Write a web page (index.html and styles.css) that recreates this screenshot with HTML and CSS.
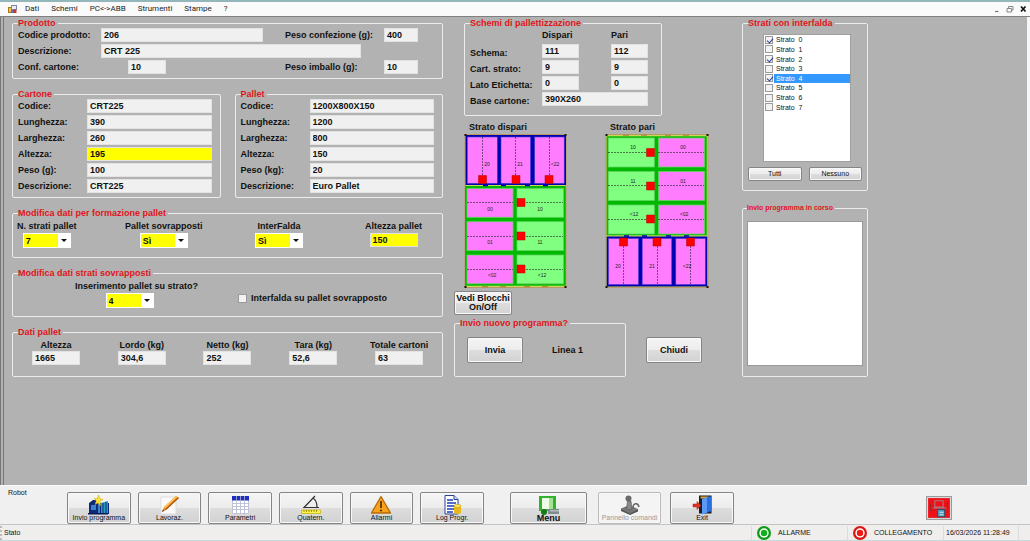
FILE: index.html
```html
<!DOCTYPE html>
<html lang="it">
<head>
<meta charset="utf-8">
<title>Pallettizzazione</title>
<link rel="stylesheet" href="styles.css">
</head>
<body>
<div class="app">
  <nav class="menubar">
    <svg class="app-icon" viewBox="0 0 9 9"><rect x="0.5" y="2.5" width="4" height="5" fill="#f5c04a" stroke="#a8771c"/><rect x="3.5" y="0.5" width="5" height="4" fill="#e9edf5" stroke="#7c88a8"/><rect x="5" y="4.5" width="3.5" height="3.5" fill="#c23a2c"/><rect x="3" y="5" width="2.5" height="3" fill="#5a6fc4"/></svg>
    <a href="#">Dati</a>
    <a href="#">Schemi</a>
    <a href="#">PC&lt;-&gt;ABB</a>
    <a href="#">Strumenti</a>
    <a href="#">Stampe</a>
    <a href="#">?</a>
    <div class="window-buttons">
      <button type="button" aria-label="Riduci"><svg viewBox="0 0 8 8"><path d="M2 6.5h3.5" stroke="#777" stroke-width="1.2"/></svg></button>
      <button type="button" aria-label="Ripristina"><svg viewBox="0 0 8 8"><path d="M2.5 3V1.5h4.500v3.500h-1.500M1 3.500h4.500v3.500h-4.500z" fill="none" stroke="#888"/></svg></button>
      <button type="button" aria-label="Chiudi finestra"><svg viewBox="0 0 8 8"><path d="M2 1.500l4.500 5M6.500 1.500l-4.500 5" stroke="#111" stroke-width="1.700"/></svg></button>
    </div>
  </nav>

  <main class="workspace">
    <div class="column">
      <fieldset class="group">
        <legend>Prodotto</legend>
        <div class="product">
          <label for="codprod">Codice prodotto:</label>
          <input id="codprod" class="span-code" value="206">
          <label for="pesoconf" class="col-weight">Peso confezione (g):</label>
          <input id="pesoconf" class="col-value" value="400">
          <label for="descr" class="col-first">Descrizione:</label>
          <input id="descr" class="span-descr" value="CRT 225">
          <label for="confcart" class="col-first">Conf. cartone:</label>
          <input id="confcart" class="col-conf" value="10">
          <label for="pesoimb" class="col-weight">Peso imballo (g):</label>
          <input id="pesoimb" class="col-value" value="10">
        </div>
      </fieldset>

      <div class="pair">
        <fieldset class="group">
          <legend>Cartone</legend>
          <div class="fields">
            <label for="c1">Codice:</label><input id="c1" value="CRT225">
            <label for="c2">Lunghezza:</label><input id="c2" value="390">
            <label for="c3">Larghezza:</label><input id="c3" value="260">
            <label for="c4">Altezza:</label><input id="c4" class="yellow" value="195">
            <label for="c5">Peso (g):</label><input id="c5" value="100">
            <label for="c6">Descrizione:</label><input id="c6" value="CRT225">
          </div>
        </fieldset>
        <fieldset class="group">
          <legend>Pallet</legend>
          <div class="fields">
            <label for="p1">Codice:</label><input id="p1" value="1200X800X150">
            <label for="p2">Lunghezza:</label><input id="p2" value="1200">
            <label for="p3">Larghezza:</label><input id="p3" value="800">
            <label for="p4">Altezza:</label><input id="p4" value="150">
            <label for="p5">Peso (kg):</label><input id="p5" value="20">
            <label for="p6">Descrizione:</label><input id="p6" value="Euro Pallet">
          </div>
        </fieldset>
      </div>

      <fieldset class="group">
        <legend>Modifica dati per formazione pallet</legend>
        <div class="formation">
          <div class="stack"><label for="nstrati">N. strati pallet</label><span class="combo"><select id="nstrati"><option>7</option></select></span></div>
          <div class="stack"><label for="sovr">Pallet sovrapposti</label><span class="combo"><select id="sovr"><option>Sì</option></select></span></div>
          <div class="stack"><label for="interf">InterFalda</label><span class="combo"><select id="interf"><option>Sì</option></select></span></div>
          <div class="stack"><label for="altp">Altezza pallet</label><input id="altp" class="short yellow" value="150"></div>
        </div>
      </fieldset>

      <fieldset class="group">
        <legend>Modifica dati strati sovrapposti</legend>
        <div class="overlap">
          <div class="stack"><label for="insp">Inserimento pallet su strato?</label><span class="combo"><select id="insp"><option>4</option></select></span></div>
          <label class="check"><input type="checkbox" class="tick">Interfalda su pallet sovrapposto</label>
        </div>
      </fieldset>

      <fieldset class="group">
        <legend>Dati pallet</legend>
        <div class="totals">
          <div class="stack"><label for="t1">Altezza</label><input id="t1" class="short" value="1665"></div>
          <div class="stack"><label for="t2">Lordo (kg)</label><input id="t2" class="short" value="304,6"></div>
          <div class="stack"><label for="t3">Netto (kg)</label><input id="t3" class="short" value="252"></div>
          <div class="stack"><label for="t4">Tara (kg)</label><input id="t4" class="short" value="52,6"></div>
          <div class="stack"><label for="t5">Totale cartoni</label><input id="t5" class="short" value="63"></div>
        </div>
      </fieldset>
    </div>

    <div class="column schemes-column">
      <fieldset class="group schemes">
        <legend>Schemi di pallettizzazione</legend>
        <div class="scheme-grid">
          <span class="head odd">Dispari</span><span class="head even">Pari</span>
          <label for="s1">Schema:</label><input id="s1" class="odd" value="111"><input class="even" aria-label="Schema pari" value="112">
          <label for="s2">Cart. strato:</label><input id="s2" class="odd" value="9"><input class="even" aria-label="Cart. strato pari" value="9">
          <label for="s3">Lato Etichetta:</label><input id="s3" class="odd" value="0"><input class="even" aria-label="Lato Etichetta pari" value="0">
          <label for="s4">Base cartone:</label><input id="s4" class="both" value="390X260">
        </div>
      </fieldset>

      <div class="layers">
        <figure>
          <figcaption>Strato dispari</figcaption>
          <svg class="layer" viewBox="0 0 104 154">
            <rect x="1" y="0.500" width="101" height="153" fill="#c9d85a" stroke="#b99a62"/>
            <rect x="1.500" y="1" width="100.500" height="50" fill="#0000b0"/>
            <rect x="1" y="52" width="100.700" height="99.700" fill="#00b800"/>
            <g fill="#ff7cff" stroke="#4a3cd8" stroke-width=".6">
              <rect x="3.300" y="3" width="30" height="46.300"/><rect x="37" y="3" width="29.500" height="46.300"/><rect x="70.700" y="3" width="29.500" height="46.300"/>
            </g>
            <g stroke="#5fd65f" stroke-width=".8">
              <g fill="#ff7cff"><rect x="3" y="54.500" width="46" height="28.800"/><rect x="3" y="87.700" width="46" height="28.800"/><rect x="3" y="121" width="46" height="28.800"/></g>
              <g fill="#80ff80"><rect x="53" y="54.500" width="46.500" height="28.800"/><rect x="53" y="87.700" width="46.500" height="28.800"/><rect x="53" y="121" width="46.500" height="28.800"/></g>
            </g>
            <g class="dash"><path d="M18.500 3v39M51.500 3v39M85.500 3v39M3 68.500h46M53 68.500h46M3 102.500h46M53 102.500h46M3 135.500h46M53 135.500h46"/></g>
            <g class="mark"><path d="M14.500 41.500h8v8h-8zM48 41.500h8v8h-8zM81 41.500h8v8h-8zM53 64.500h8v8h-8zM53 98h8v8h-8zM53 131h8v8h-8z"/></g>
            <path d="M19 51.500h5M37 51.500h5M61 51.500h5M79 51.500h5" stroke="#0000b0" stroke-width="1.500"/>
            <path d="M18 152.700h6M36 152.700h6M60 152.700h6M78 152.700h6" stroke="#b07c3c"/>
            <path d="M0.500 0h2v2h-2zM100.500 0h2v2h-2zM0.500 152h2v2h-2zM100.500 152h2v2h-2z" fill="#111"/>
            <g class="tag"><text x="23" y="32">20</text><text x="56" y="32">21</text><text x="91" y="32">&lt;22</text><text x="26" y="77">00</text><text x="76" y="77">10</text><text x="26" y="110">01</text><text x="76" y="110">11</text><text x="28" y="143">&lt;02</text><text x="78" y="143">&lt;12</text></g>
          </svg>
        </figure>
        <figure>
          <figcaption>Strato pari</figcaption>
          <svg class="layer" viewBox="0 0 104 154">
            <rect x="1" y="0.500" width="102" height="153" fill="#c9d85a" stroke="#b99a62"/>
            <rect x="1.700" y="2.300" width="100" height="99" fill="#00b800"/>
            <rect x="1.700" y="102.500" width="100.500" height="50" fill="#0000b0"/>
            <g stroke="#5fd65f" stroke-width=".8">
              <g fill="#80ff80"><rect x="3.300" y="4" width="46" height="29"/><rect x="3.300" y="37.500" width="46" height="29"/><rect x="3.300" y="71" width="46" height="29"/></g>
              <g fill="#ff7cff"><rect x="53.500" y="4" width="46" height="29"/><rect x="53.500" y="37.500" width="46" height="29"/><rect x="53.500" y="71" width="46" height="29"/></g>
            </g>
            <g fill="#ff7cff" stroke="#4a3cd8" stroke-width=".6">
              <rect x="3.500" y="104.500" width="30" height="46"/><rect x="37.200" y="104.500" width="29.500" height="46"/><rect x="70.800" y="104.500" width="29.500" height="46"/>
            </g>
            <g class="dash"><path d="M3 18.500h46M53 18.500h46M3 51.500h46M53 51.500h46M3 85.500h46M53 85.500h46M18.500 112v39M52.500 112v39M85.500 112v39"/></g>
            <g class="mark"><path d="M41.500 14.500h8v8h-8zM41.500 48h8v8h-8zM41.500 81h8v8h-8zM14.500 104h8v8h-8zM48 104h8v8h-8zM81.500 104h8v8h-8z"/></g>
            <path d="M19 102h5M37 102h5M61 102h5M79 102h5" stroke="#0000b0" stroke-width="1.500"/>
            <path d="M18 1.200h6M36 1.200h6M60 1.200h6M78 1.200h6" stroke="#b07c3c"/>
            <path d="M0.500 0h2v2h-2zM101.500 0h2v2h-2zM0.500 152h2v2h-2zM101.500 152h2v2h-2z" fill="#111"/>
            <g class="tag"><text x="28" y="15">10</text><text x="78" y="15">00</text><text x="28" y="49">11</text><text x="78" y="49">01</text><text x="29" y="82">&lt;12</text><text x="79" y="82">&lt;02</text><text x="13" y="134">20</text><text x="47" y="134">21</text><text x="82" y="134">&lt;22</text></g>
          </svg>
        </figure>
      </div>

      <button type="button" class="btn blocks">Vedi Blocchi<br>On/Off</button>

      <div class="send-row">
        <fieldset class="group">
          <legend>Invio nuovo programma?</legend>
          <div class="send"><button type="button" class="btn action">Invia</button><span>Linea 1</span></div>
        </fieldset>
        <button type="button" class="btn action">Chiudi</button>
      </div>
    </div>

    <div class="column side">
      <fieldset class="group">
        <legend>Strati con interfalda</legend>
        <div class="list">
          <div class="rows">
            <label><input type="checkbox" class="tick" checked><span>Strato  0</span></label>
            <label><input type="checkbox" class="tick"><span>Strato  1</span></label>
            <label><input type="checkbox" class="tick" checked><span>Strato  2</span></label>
            <label><input type="checkbox" class="tick"><span>Strato  3</span></label>
            <label class="selected"><input type="checkbox" class="tick" checked><span>Strato  4</span></label>
            <label><input type="checkbox" class="tick"><span>Strato  5</span></label>
            <label><input type="checkbox" class="tick"><span>Strato  6</span></label>
            <label><input type="checkbox" class="tick"><span>Strato  7</span></label>
          </div>
        </div>
        <div class="list-buttons">
          <button type="button" class="btn small">Tutti</button>
          <button type="button" class="btn small">Nessuno</button>
        </div>
      </fieldset>
      <fieldset class="group progress">
        <legend>Invio programma in corso</legend>
        <div class="log"></div>
      </fieldset>
    </div>
  </main>

  <footer class="toolbar">
    <span class="robot">Robot</span>
    <div class="tools">
      <button type="button" class="btn tool">
        <svg viewBox="0 0 22 20"><path d="M1 8l4-3h5v3h11v11H1z" fill="#0c2a78"/><path d="M3 10h5v5H3zM10 9h2v9h-2z" fill="#3f7fd0"/><path d="M13 8l7-2v12h-7z" fill="#2a9ac0"/><path d="M15 8v10M18 7v11" stroke="#0c2a78"/><path d="M0 18h20v1.500H0z" fill="#071a55"/><path d="M10.500 0l1.200 3.500 3.300 1-3 1.500.5 5-2.500-3-3 1.500 1.300-3.500-2-2.500 3 .2z" fill="#ffe23a" stroke="#c9a400" stroke-width=".5"/></svg>
        <span>Invio programma</span></button>
      <button type="button" class="btn tool">
        <svg viewBox="0 0 22 20"><path d="M3 2h15v17H3z" fill="#fafafa" stroke="#ddd"/><path d="M4 17l2-5L18 1l3 2L8 15z" fill="#e8861e"/><path d="M6 12L18 1l1.300.8L7 13.500z" fill="#ffc65a"/><path d="M8 15L21 3l-.8-.6L7.300 14.300z" fill="#a04a10"/><path d="M4 17l.8-2.300 1.400 1.100z" fill="#333"/></svg>
        <span>Lavoraz.</span></button>
      <button type="button" class="btn tool">
        <svg viewBox="0 0 22 20"><path d="M3.500 1.500h16v17h-16z" fill="#fff" stroke="#c4c4d8"/><path d="M3 1h17v4.500H3z" fill="#1c2fc0"/><path d="M7.500 1v18M11.500 1v18M15.500 1v18M3 8.500h17M3 11.500h17M3 14.500h17" stroke="#b4b8d0" stroke-width=".8"/></svg>
        <span>Parametri</span></button>
      <button type="button" class="btn tool">
        <svg viewBox="0 0 22 20"><path d="M15 1L4 12.500h15M13 3c3 2 4 5 4 9" fill="none" stroke="#333" stroke-width="1.200"/><path d="M1.500 15h19v3.500h-19z" fill="#fff34a" stroke="#c2b200" stroke-width=".7"/><path d="M4 15v2M6.500 15v2M9 15v2M11.500 15v2M14 15v2M16.500 15v2" stroke="#776d00" stroke-width=".7"/></svg>
        <span>Quatern.</span></button>
      <button type="button" class="btn tool">
        <svg viewBox="0 0 22 20"><path d="M11 1.500L20.500 18h-19z" fill="#f7a21b" stroke="#b86a08" stroke-width="1.300" stroke-linejoin="round"/><path d="M11 6v7" stroke="#5a2f00" stroke-width="1.700"/><circle cx="11" cy="15.500" r="1.100" fill="#5a2f00"/></svg>
        <span>Allarmi</span></button>
      <button type="button" class="btn tool">
        <svg viewBox="0 0 22 20"><path d="M4 .5h9l4 4V19H4z" fill="#fff" stroke="#26439c"/><path d="M13 .5v4h4" fill="#cdd8f4" stroke="#26439c"/><path d="M6 5h6M6 8h9M6 11h8M6 14h7M6 17h6" stroke="#1f3fb4" stroke-width="1.400"/><path d="M13 11v7q3.500 2 7 0v-7z" fill="#e8b81c"/><ellipse cx="16.500" cy="11" rx="3.500" ry="1.700" fill="#ffe45c" stroke="#b38a00" stroke-width=".5"/></svg>
        <span>Log Progr.</span></button>
    </div>
    <button type="button" class="btn tool menu">
      <svg viewBox="0 0 22 20"><path d="M1 1h17v15H1z" fill="#35b22c"/><path d="M4 3h7v11H4z" fill="#effbe9"/><path d="M11 3h4v11h-4z" fill="#a4e294"/><path d="M10 14h11v5H10z" fill="#7e8a8e"/><path d="M12 15h9v1.500h-9z" fill="#b4bcc0"/><circle cx="6" cy="17" r="3" fill="#16791a"/></svg>
      <span>Menu</span></button>
    <button type="button" class="btn tool panel" disabled>
      <svg viewBox="0 0 22 20"><path d="M2 14l8-3.500 9 4-8 4.500z" fill="#777" stroke="#555" stroke-width=".6"/><path d="M2 14v2l9 4v-1.500zM19 14.500v2L11 20v-1.500z" fill="#555"/><path d="M8.500 6h3.500l1 8-3 1-2.500-1z" fill="#888" stroke="#555" stroke-width=".6"/><circle cx="9.500" cy="3.500" r="3" fill="#6a6a6a"/><path d="M14 13c0-5 5-6 6-1" fill="none" stroke="#666" stroke-width="1.500"/></svg>
      <span>Pannello comandi</span></button>
    <button type="button" class="btn tool exit">
      <svg viewBox="0 0 22 20"><path d="M8 .5h12.500V18.500H8z" fill="#1c1c24"/><path d="M9.500 1.500h8v2h-8z" fill="#e0a52e"/><path d="M11 4l9.500-3v15L11 19.500z" fill="#2a6fe0"/><path d="M11 4l5-1.600v15L11 19.500z" fill="#5a9af5"/><path d="M2 9h4V6.500l4 4-4 4V12H2z" fill="#e03428" stroke="#a01810" stroke-width=".5"/></svg>
      <span>Exit</span></button>
    <svg class="link-icon" viewBox="0 0 25 23"><rect x=".5" y=".5" width="24" height="22" fill="#ddd" stroke="#999"/><rect x="2" y="2" width="21" height="19" fill="#ee1118"/><path d="M8.500 4.500h8v6h-8zM6.500 11.500h13" fill="none" stroke="#a87880"/><path d="M4.500 8v5M20.500 6v6M4 14h4" fill="none" stroke="#7a2a3a" stroke-dasharray="2 1"/><path d="M11 13h7v7h-7z" fill="#4d98b8" stroke="#354e66"/><path d="M13 15h4v1h-4zM13 17.500h4v1h-4z" fill="#d6edf5"/></svg>
  </footer>

  <div class="statusbar">
    <span class="state">Stato</span>
    <span class="cell"><svg viewBox="0 0 14 14"><circle cx="7" cy="7" r="7" fill="#0d9a18"/><circle cx="7" cy="7" r="4.700" fill="#fff"/><circle cx="7" cy="7" r="3.200" fill="#12b01e"/></svg>ALLARME</span>
    <span class="cell"><svg viewBox="0 0 14 14"><circle cx="7" cy="7" r="7" fill="#d81810"/><circle cx="7" cy="7" r="4.700" fill="#fff"/><circle cx="7" cy="7" r="3.200" fill="#f01c14"/></svg>COLLEGAMENTO</span>
    <span class="cell date">16/03/2026 11:28:49</span>
    <span class="cell"></span>
  </div>
</div>
</body>
</html>
```
FILE: styles.css
```css
* { box-sizing: border-box; }

body {
  margin: 0;
  background: #f0f0f0;
  color: #111;
  font: bold 9px/10px "Liberation Sans", Arial, sans-serif;
}

.app {
  display: flex;
  flex-direction: column;
  min-height: 100vh;
  border-bottom: 1px solid #c3dcdc;
}

/* Menu bar */
.menubar {
  display: flex;
  align-items: center;
  gap: 12px;
  height: 17px;
  padding: 0 0 0 8px;
  border-top: 2px solid #93b6ba;
  border-bottom: 1px solid #808080;
  background: #fafafa;
  font: 8px/12px Roboto, "Noto Sans", sans-serif;
}
.menubar a { color: #222; text-decoration: none; }
.app-icon { width: 9px; height: 9px; margin-right: -4px; }
.window-buttons { display: flex; gap: 5px; margin-left: auto; padding-right: 3px; }
.window-buttons button { width: 8px; height: 8px; padding: 0; border: 0; background: none; }
.window-buttons svg { display: block; width: 8px; height: 8px; }

/* Work area */
.workspace {
  flex: 1;
  display: grid;
  grid-template-columns: 431fr 277fr 126fr 148fr;
  align-items: start;
  column-gap: 11px;
  padding: 1px 0 8px 8px;
  border-left: 4px double #777;
  border-right: 3px solid #f4f7fa;
  background: #b2b2b2;
}
.column { display: flex; flex-direction: column; gap: 10px; }

.group {
  min-width: 0;
  margin: 0;
  padding: 0 5px 4px;
  border: 1px solid #ececec;
  border-radius: 2px;
}
.group legend { margin: 0; padding: 0 2px 0 0; color: #e0141c; line-height: 10px; }

input:not([type]) {
  width: 100%;
  min-width: 0;
  height: 14px;
  padding: 0 2px;
  border: 1px solid #e2e2e2;
  border-radius: 0;
  background: #f0f0f0;
  color: #111;
  font: inherit;
}
input.yellow { background: #ffff00; }
input.short { width: 48px; }

.product {
  display: grid;
  grid-template-columns: 83px 27fr 38fr 97fr 22fr 99px 34fr 19fr;
  grid-auto-rows: 14px;
  row-gap: 2px;
  align-items: center;
}
.product .span-code { grid-column: 2 / 5; }
.product .col-weight { grid-column: 6; }
.product .col-value { grid-column: 7; }
.product .col-first { grid-column: 1; }
.product .span-descr { grid-column: 2 / 7; width: 92%; }
.product .col-conf { grid-column: 3; }

.pair { display: grid; grid-template-columns: 1fr 1fr; gap: 14px; }
.fields {
  display: grid;
  grid-template-columns: 69px 1fr;
  grid-auto-rows: 14px;
  row-gap: 2px;
  align-items: center;
  padding-right: 3px;
}

.stack { display: flex; flex-direction: column; align-items: center; gap: 2px; white-space: nowrap; }

.combo { position: relative; display: block; width: 48px; height: 15px; }
.combo select {
  display: block;
  width: 100%;
  height: 15px;
  padding: 0 2px;
  border: 1px solid #fff;
  border-radius: 0;
  appearance: none;
  background: linear-gradient(#ffff00, #ffff00) left / 34px 100% no-repeat #fff;
  color: #111;
  font: inherit;
}
.combo::after {
  content: "";
  position: absolute;
  top: 6px;
  right: 4px;
  border: 3px solid transparent;
  border-top-color: #111;
  border-bottom-width: 0;
  pointer-events: none;
}

.formation {
  display: grid;
  grid-template-columns: 108fr 130fr 110fr 72fr;
  justify-items: start;
  padding: 3px 0 5px;
  margin-left: -1px;
}
.overlap { display: flex; align-items: center; gap: 40px; padding: 3px 0 4px 57px; }
.overlap .combo { margin-right: 14px; }
.check { display: flex; align-items: center; gap: 4px; padding-top: 7px; }
.totals { display: grid; grid-template-columns: repeat(5, 1fr); margin: 0 -5px; padding: 3px 0 7px; }
.totals .stack { gap: 1px; }

.tick {
  flex: none;
  position: relative;
  width: 9px;
  height: 9px;
  margin: 0;
  border: 1px solid #9a9a9a;
  appearance: none;
  background: #f2f2f2;
}
.tick:checked::after {
  content: "";
  position: absolute;
  left: 2px;
  top: 0;
  width: 3px;
  height: 5px;
  border: solid #2b3c9c;
  border-width: 0 1px 1px 0;
  transform: rotate(40deg);
}

/* Schemes */
.schemes-column { gap: 0; }
.schemes { width: 198px; margin-left: 10px; padding-bottom: 9px; }
.scheme-grid {
  display: grid;
  grid-template-columns: 72px 37px 32px 37px;
  grid-template-rows: 13px;
  grid-auto-rows: 14px;
  row-gap: 2px;
  padding-top: 1px;
}
.scheme-grid label { grid-column: 1; padding-top: 4px; white-space: nowrap; }
.head { padding-top: 1px; }
.odd { grid-column: 2; }
.even { grid-column: 4; }
.both { grid-column: 2 / 5; }

.layers { display: flex; gap: 37px; margin: 6px 0 0 10px; }
figure { margin: 0; }
figcaption { padding-left: 5px; }
.layer { display: block; width: 104px; height: 154px; margin-top: 2px; }
.layer .dash { fill: none; stroke: #222; stroke-width: 0.6px; stroke-dasharray: 2 1; }
.layer .mark { fill: #ff0000; stroke: #b00000; stroke-width: 0.5px; }
.layer .tag { fill: #222; font: 5px "Liberation Sans", sans-serif; text-anchor: middle; }

.btn {
  padding: 0;
  border: 1px solid #858585;
  border-radius: 2px;
  background: linear-gradient(#f5f5f5, #ececec 50%, #dddddd 51%, #d2d2d2);
  box-shadow: inset 0 0 0 1px #f8f8f8;
  color: #111;
  font: inherit;
}
.blocks { width: 58px; height: 24px; margin: 3px 0; line-height: 9px; }
.action { width: 56px; height: 26px; }
.send-row { display: flex; align-items: stretch; gap: 20px; }
.send-row .group { width: 172px; padding: 0 12px 13px; }
.send-row .group legend { margin-left: -7px; }
.send-row > .action { align-self: flex-end; margin-bottom: 14px; }
.send { display: flex; align-items: center; gap: 29px; padding-top: 9px; }

/* Layer list */
.side { gap: 12px; }
.list {
  height: 128px;
  margin: 6px 11px 0 15px;
  border: 1px solid #a0a0a0;
  background: #fff;
  font: 7px/9px "Liberation Sans", Arial, sans-serif;
}
.rows { display: grid; grid-template-rows: repeat(8, 1fr); height: 77px; }
.rows label { display: flex; align-items: center; gap: 1px; padding-left: 1px; }
.rows span { flex: 1; padding-left: 2px; white-space: pre; }
.rows .tick { width: 8px; height: 8px; }
.rows .selected span { background: #3399ff; color: #fff; }
.list-buttons { display: flex; gap: 7px; padding: 5px 0; }
.small { flex: 1; height: 14px; font: 7px/10px "Liberation Sans", Arial, sans-serif; }
.progress legend { font-size: 7px; }
.progress { padding: 0 4px 10px; }
.log { height: 145px; margin-top: 8px; border: 1px solid #999; background: #fff; }

/* Toolbar */
.toolbar {
  display: grid;
  grid-template-columns: 67fr 417fr 26fr 77fr 11fr 63fr 9fr 64fr 192fr 26fr 78fr;
  align-items: center;
  height: 40px;
  padding-top: 6px;
  border-top: 1px solid #fafafa;
  border-bottom: 1px solid #c4c4c4;
  background: #f0f0f0;
  font: 7px/8px "Liberation Sans", Arial, sans-serif;
}
.robot { align-self: start; padding-left: 8px; line-height: 1px; }
.tools { display: grid; grid-template-columns: repeat(6, 1fr); gap: 7px; }
.tool { display: flex; flex-direction: column; align-items: center; height: 32px; padding-top: 2px; white-space: nowrap; }
.tool svg { width: 22px; height: 20px; }
.tool span { margin-top: -1px; }
.menu { grid-column: 4; }
.menu span { font: bold 9px/8px "Liberation Sans", Arial, sans-serif; }
.panel { grid-column: 6; border-color: #bbb; background: #f4f4f4; color: #999; }
.exit { grid-column: 8; }
.link-icon { grid-column: 10; width: 26px; height: 24px; }

.statusbar {
  display: grid;
  grid-template-columns: 751fr 96fr 96fr 75fr 12fr;
  align-items: center;
  height: 15px;
  background: #f0eeed;
  font: 7px/14px "Liberation Sans", Arial, sans-serif;
}
.state { padding-left: 2px; border-left: 2px dotted #bbb; }
.cell { display: flex; align-items: center; gap: 7px; height: 14px; padding-left: 5px; border-left: 1px solid #dcdcdc; white-space: nowrap; }
.cell svg { width: 14px; height: 14px; }
.cell.date { padding-left: 2px; }
```
